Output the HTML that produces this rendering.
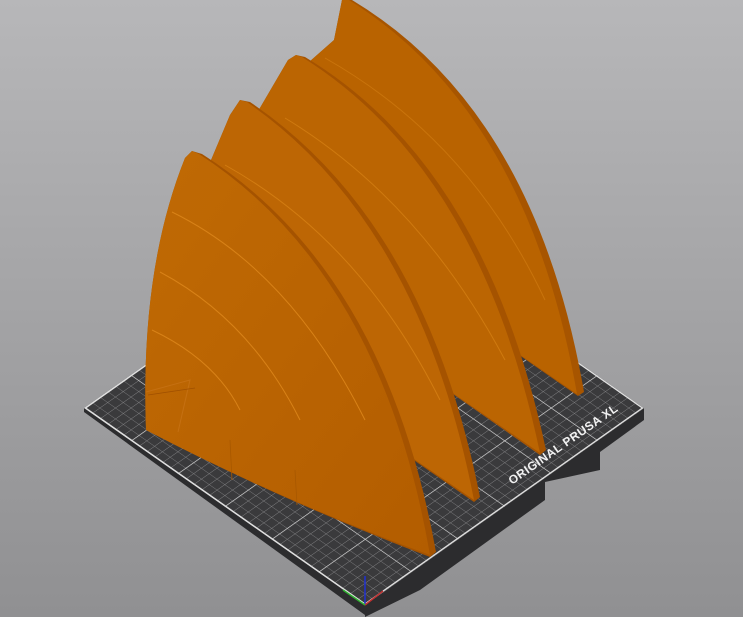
<!DOCTYPE html>
<html><head><style>html,body{margin:0;padding:0;width:743px;height:617px;overflow:hidden}</style></head>
<body>
<svg width="743" height="617" viewBox="0 0 743 617" xmlns="http://www.w3.org/2000/svg">
<defs>
<linearGradient id="bg" x1="0" y1="0" x2="0" y2="1"><stop offset="0" stop-color="#b7b7b9"/><stop offset="1" stop-color="#909092"/></linearGradient>
<pattern id="grid" width="10" height="10" patternUnits="userSpaceOnUse">
<rect width="10" height="10" fill="#3a3a3c"/>
<path d="M0 0H10M0 0V10" stroke="#8a8a8c" stroke-width="0.9" fill="none"/>
</pattern>
<pattern id="major" width="60" height="60" patternUnits="userSpaceOnUse">
<path d="M0 0H60M0 0V60" stroke="#d8d8d8" stroke-width="1.4" fill="none"/>
</pattern>
<linearGradient id="o1" x1="0" y1="0" x2="1" y2="1"><stop offset="0" stop-color="#c06a04"/><stop offset="1" stop-color="#b35d00"/></linearGradient>
</defs>
<rect width="743" height="617" fill="url(#bg)"/>
<path d="M365,605 L644,408 L644,420 L600,452 L600,470 L545,482 L545,500 L420,590 L365,617 Z" fill="#2c2c2e"/>
<path d="M365,605 L365,615 L84,412 L84,408 Z" fill="#2c2c2e"/>
<g transform="matrix(0.7806,0.5472,0.775,-0.5472,84,408)">
<rect x="0" y="0" width="360" height="360" fill="url(#grid)"/>
<rect x="0" y="0" width="360" height="360" fill="url(#major)"/>
<rect x="1" y="1" width="358" height="358" fill="none" stroke="#e0e0e0" stroke-width="1.5"/>
</g>
<text x="0" y="0" transform="translate(512,485) rotate(-35)" fill="#f2f2f2" font-family="Liberation Sans, sans-serif" font-weight="bold" font-size="12" letter-spacing="0.5">ORIGINAL PRUSA XL</text>
<line x1="365" y1="605" x2="365" y2="576" stroke="#2030d0" stroke-width="1.5"/>
<line x1="365" y1="605" x2="383" y2="591" stroke="#c03030" stroke-width="1.5"/>
<line x1="365" y1="605" x2="343" y2="590" stroke="#30b030" stroke-width="1.5"/>
<!-- fin 4 -->
<path d="M334,40 L342,0 L352,0 Q535,110 584,392 L578,396 L440,300 L300,70 Z" fill="#a75500"/>
<path d="M334,40 L342,0 L349,0 Q528,112 577,394 L440,300 L300,70 Z" fill="#b96300"/>
<path d="M325,58 Q470,140 545,300" stroke="#c9740c" stroke-width="1" fill="none"/>
<!-- fin 3 -->
<path d="M288,60 L296,55 L305,57 Q485,165 546,450 L540,455 L390,350 L250,125 Z" fill="#a55300"/>
<path d="M288,60 L296,55 L302,57 Q480,168 540,453 L390,350 L250,125 Z" fill="#bb6502"/>
<path d="M285,118 Q420,200 505,360" stroke="#cf7a10" stroke-width="1" fill="none"/>
<!-- fin 2 -->
<path d="M230,115 L240,100 L250,102 Q425,220 480,497 L474,502 L320,395 L190,210 Z" fill="#a55300"/>
<path d="M230,115 L240,100 L247,102 Q420,222 474,500 L320,395 L190,210 Z" fill="#bd6604"/>
<path d="M225,165 Q360,240 440,400" stroke="#d27c12" stroke-width="1" fill="none"/>
<!-- fin 1 -->
<path d="M185,158 L192,151 L202,154 Q385,270 436,552 L430,557 Q280,500 146,430 Q140,270 185,158 Z" fill="#a55300"/>
<path d="M185,158 L192,151 L199,154 Q381,272 430,555 Q280,500 146,430 Q140,270 185,158 Z" fill="url(#o1)"/>
<path d="M172,212 Q290,270 365,420" stroke="#d88218" stroke-width="1" fill="none"/>
<path d="M160,272 Q250,320 300,420" stroke="#d88218" stroke-width="1" fill="none"/>
<path d="M152,330 Q215,360 240,410" stroke="#d88218" stroke-width="1" fill="none"/>
<path d="M146,392 L190,380 L178,432" stroke="#c57012" stroke-width="1" fill="none"/>
<path d="M148,395 L195,388" stroke="#a05000" stroke-width="0.8" fill="none"/>
<path d="M230,440 L232,480 M295,470 L297,505" stroke="#a85800" stroke-width="0.8" fill="none"/>
</svg>
</body></html>
